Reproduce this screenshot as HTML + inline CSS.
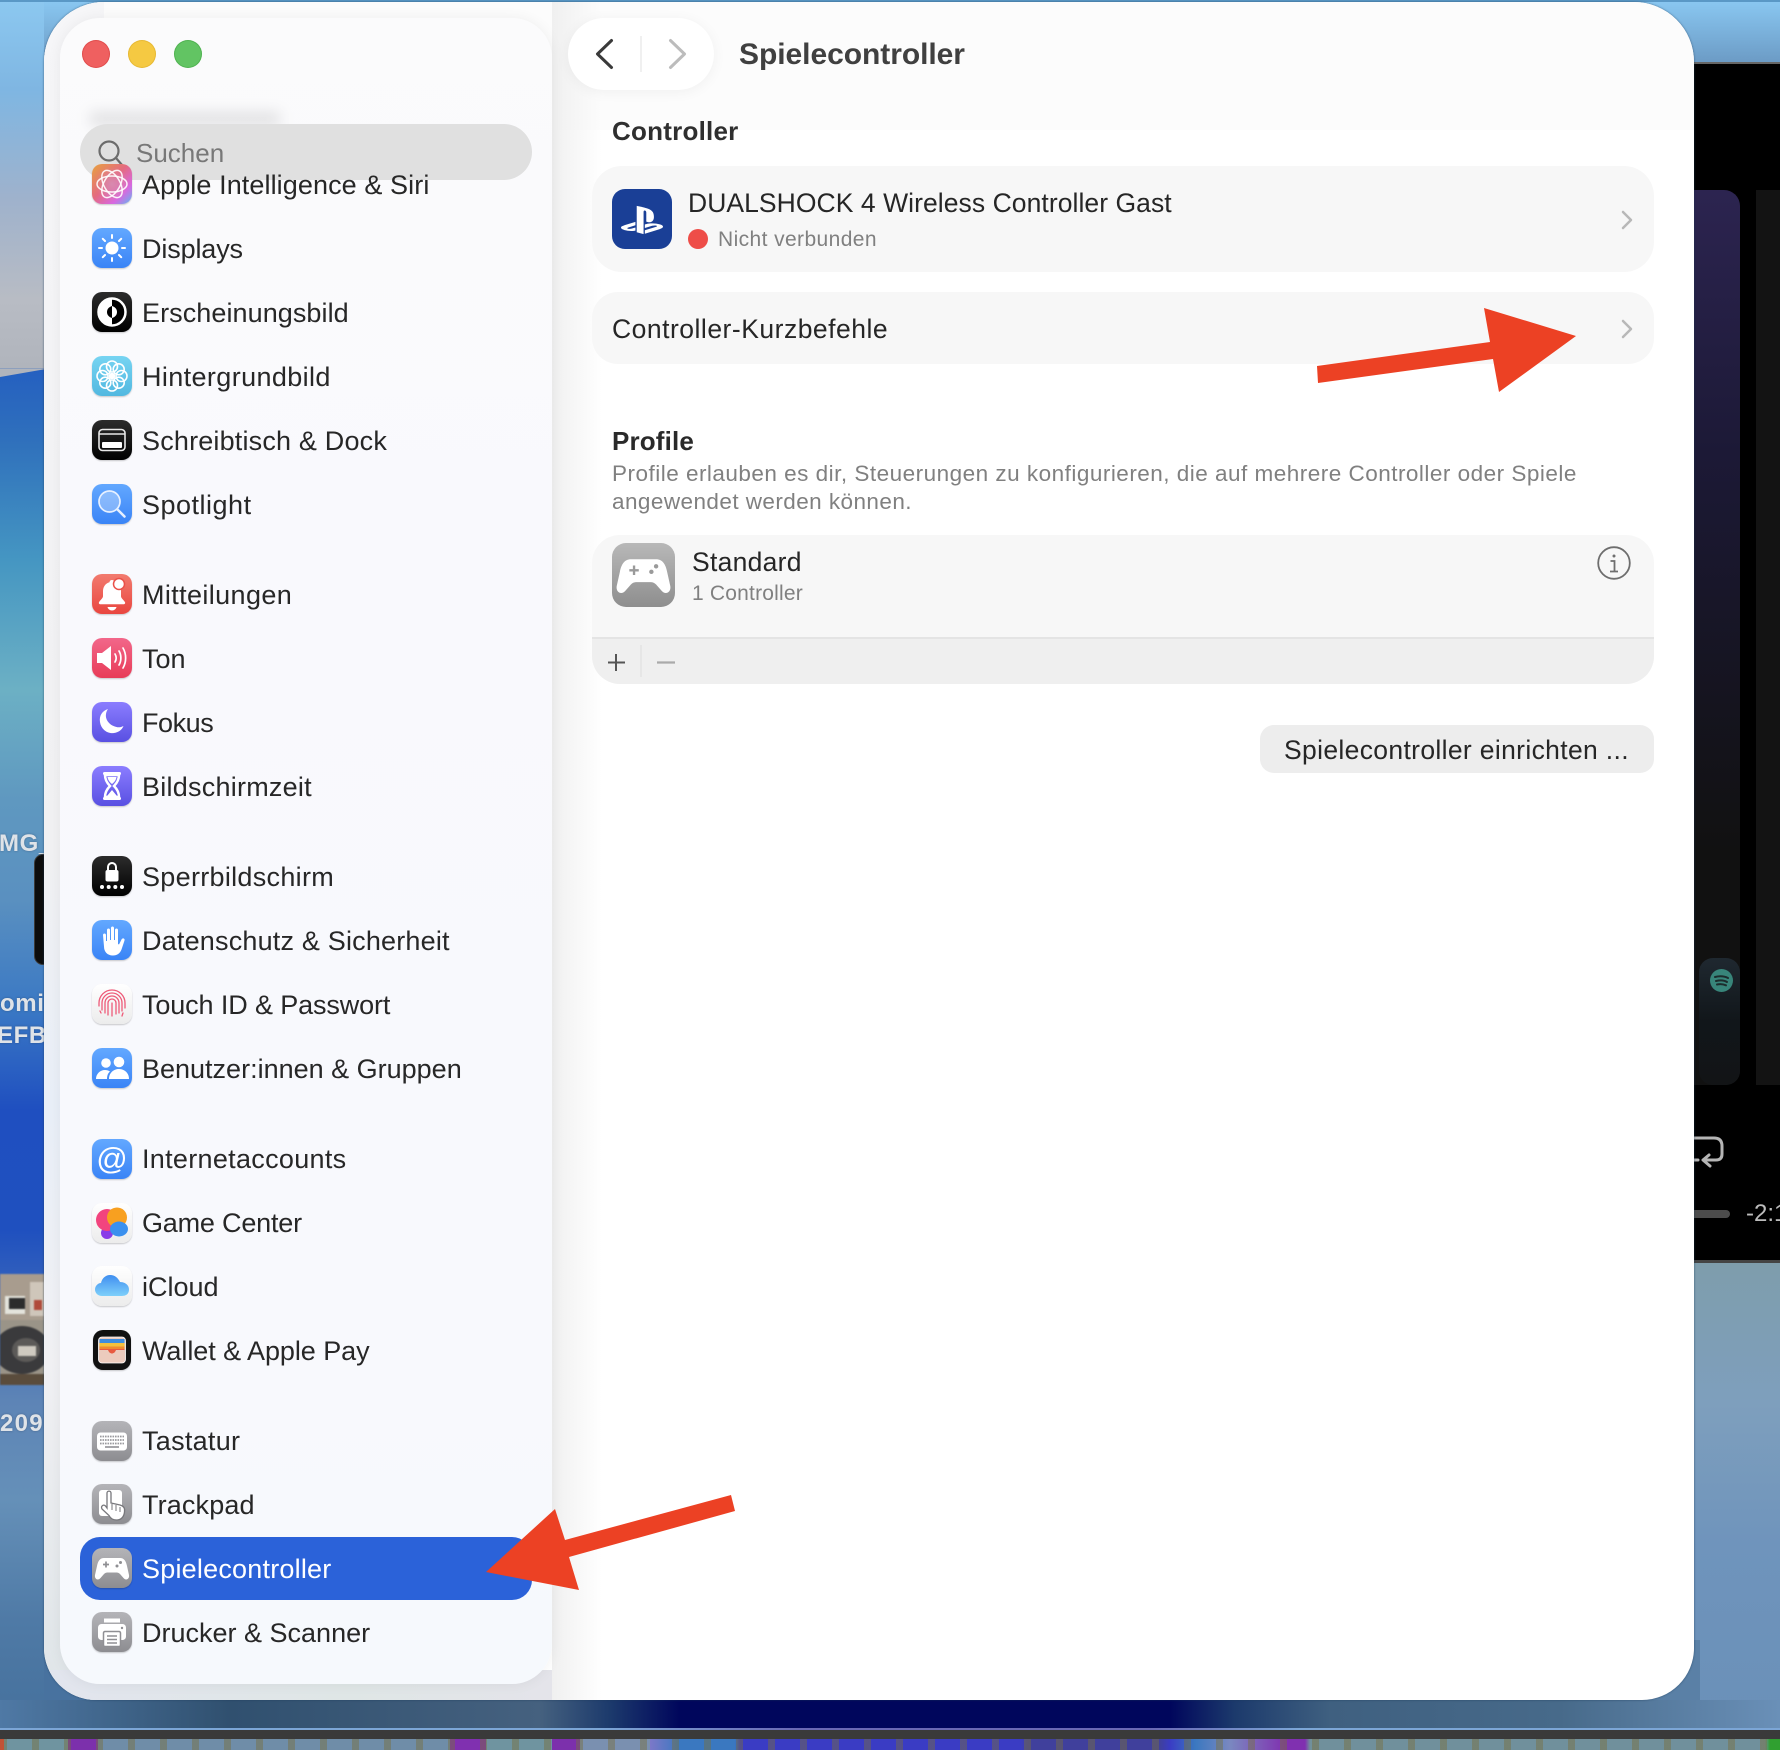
<!DOCTYPE html>
<html lang="de"><head><meta charset="utf-8"><title>Spielecontroller</title>
<style>
html,body{margin:0;padding:0;width:1780px;height:1750px;overflow:hidden;background:#000;font-family:"Liberation Sans",sans-serif}
.a{position:absolute}
.t{position:absolute;white-space:nowrap;line-height:40px;height:40px}
.r{position:absolute;left:92px;width:440px;height:40px}
.r .i{position:absolute;left:0;top:0;width:40px;height:40px;border-radius:10px;box-shadow:0 1px 1.5px rgba(0,0,0,.2);overflow:hidden}
.r svg{display:block;width:40px;height:40px}
.r span{position:absolute;left:50px;top:1px;line-height:40px;font-size:27px;color:#272727;white-space:nowrap}
.bl{background:linear-gradient(#63a8ff,#3a84f6)}
.bk{background:linear-gradient(#2c2c2c,#000)}
.wh{background:linear-gradient(#fff,#ececec)}
.gr{background:linear-gradient(#b4b4b8,#8d8d91)}
.vi{background:linear-gradient(#8b7dff,#5950e2)}
.dk{font-size:24px;font-weight:bold;color:#dfe3e8;overflow:hidden;text-shadow:0 0 2px rgba(40,60,90,.5)}
</style></head><body>
<svg width="0" height="0" style="position:absolute"><defs>
<linearGradient id="cl" x1="0" y1="0" x2="0" y2="1"><stop offset="0" stop-color="#3f8ef0"/><stop offset="1" stop-color="#7fd0fa"/></linearGradient>
</defs></svg>

<!-- wallpaper -->
<div class="a" style="left:0;top:0;width:60px;height:1730px;background:linear-gradient(#8cc8f0 0,#7fb6e2 90px,#9fb2cc 200px,#b8bcc4 300px,#b0b4bc 368px,#2560c0 370px,#2f70bc 440px,#4596c2 560px,#6cb0c4 690px,#5f98c0 800px,#5a90c0 900px,#3a78c4 1010px,#1f4fc0 1110px,#1f50bf 1230px,#5d84b6 1400px,#6590b8 1500px,#4f7aa6 1620px,#45709c 1730px)"></div>
<svg class="a" style="left:0;top:366px" width="46" height="14"><path d="M0 3H46L0 11z" fill="#b0b4bc"/></svg>
<div class="a" style="left:44px;top:0;width:1736px;height:64px;background:linear-gradient(#8ac8f2,#6b9ac4)"></div>
<div class="a" style="left:0;top:0;width:1780px;height:2px;background:#5a98c6"></div>
<div class="a" style="left:1690px;top:62px;width:90px;height:2px;background:#666"></div>
<div class="a" style="left:1690px;top:64px;width:90px;height:1196px;background:#000"></div>
<div class="a" style="left:1690px;top:190px;width:50px;height:660px;border-radius:0 16px 0 0;background:linear-gradient(#2c2450,#1c1936 40%,#111 100%)"></div>
<div class="a" style="left:1690px;top:850px;width:50px;height:235px;background:#111;border-radius:0 0 14px 0"></div>
<div class="a" style="left:1699px;top:958px;width:41px;height:127px;border-radius:14px;background:linear-gradient(#1f2830,#11161a 50%,#121416)"></div>
<div class="a" style="left:1710px;top:969px;width:23px;height:23px;border-radius:50%;background:#38857a"></div>
<svg class="a" style="left:1710px;top:969px" width="23" height="23" fill="none" stroke="#1c2c2c" stroke-width="2" stroke-linecap="round"><path d="M5 8c4-1 9-1 13 1M6 12c4-1 8-1 11 1M7 15.500c3-.7 6-.5 9 .8"/></svg>
<div class="a" style="left:1756px;top:190px;width:24px;height:895px;background:#131313"></div>
<svg class="a" style="left:1694px;top:1134px" width="32" height="34" fill="none" stroke="#b5b5b5" stroke-width="3" stroke-linecap="round" stroke-linejoin="round"><path d="M0 4h20q8 0 8 8v8q0 6-6 6H10M15 21l-6 5 7 6M0 26h4"/></svg>
<div class="a" style="left:1694px;top:1210px;width:36px;height:8px;border-radius:0 4px 4px 0;background:#4c4c4c"></div>
<div class="t" style="left:1746px;top:1194px;font-size:24px;color:#bcbcbc">-2:1</div>
<div class="a" style="left:1690px;top:1260px;width:90px;height:3px;background:#444"></div>
<div class="a" style="left:1690px;top:1263px;width:90px;height:467px;background:linear-gradient(#7e9dac,#7e9fbd 30%,#6f94bc 60%,#6a90b8)"></div>

<div class="a" style="left:34px;top:854px;width:14px;height:111px;background:#0c0c0c;border-radius:9px 0 0 9px;border:1px solid #3a3a3a;box-sizing:border-box"></div>
<div class="t dk" style="left:-1px;top:824px;width:45px;height:40px;line-height:40px;letter-spacing:.6px">MG_</div>
<div class="t dk" style="left:0;top:984px;width:44px;letter-spacing:.6px">omi</div>
<div class="t dk" style="left:-3px;top:1016px;width:47px;letter-spacing:.6px">EFB8</div>
<svg class="a" style="left:0;top:1274px;filter:blur(.9px)" width="48" height="111"><rect width="48" height="111" fill="#9a9488"/><rect width="48" height="46" fill="#a89c8e"/><rect x="5" y="22" width="20" height="18" fill="#e4e4dc"/><rect x="9" y="24" width="16" height="11" fill="#2c2c2c"/><rect x="30" y="8" width="14" height="34" fill="#cfc6ba"/><rect x="34" y="26" width="8" height="10" fill="#b04a3a"/><ellipse cx="22" cy="76" rx="28" ry="24" fill="#3a3a3c"/><ellipse cx="26" cy="76" rx="14" ry="12" fill="#5c5a58"/><rect x="18" y="72" width="18" height="10" fill="#cfcac0"/><rect y="100" width="48" height="11" fill="#5a4c3c"/></svg>
<div class="t dk" style="left:0;top:1404px;width:44px;letter-spacing:1.300px">209</div>

<!-- bottom -->
<div class="a" style="left:0;top:1700px;width:1780px;height:28px;background:linear-gradient(90deg,#4f79a5 0,#30506f 230px,#45617f 540px,#1c3a6c 610px,#00065c 680px,#00065c 1170px,#1c3a6c 1235px,#3f6080 1330px,#476a8a 1560px,#6a90b8 1780px)"></div>
<div class="a" style="left:44px;top:1640px;width:60px;height:60px;background:#48729f"></div>
<div class="a" style="left:1640px;top:1640px;width:60px;height:60px;background:#5a80a6"></div>
<div class="a" style="left:0;top:1728px;width:1780px;height:2px;background:linear-gradient(90deg,#7ca6d6 0,#7ca6d6 600px,#6a68b4 800px,#6a68b4 1150px,#7ca6d6 1300px)"></div>
<div class="a" style="left:0;top:1730px;width:1780px;height:9px;background:#3a3a3a"></div>
<div class="a" style="left:0;top:1739px;width:1780px;height:11px;background:linear-gradient(90deg,#ff3a30 0,#ff3a30 4px,#6f94a0 4px,#6f94a0 68px,#7c30ac 68px,#7c30ac 98px,#6f8da8 98px,#6f8da8 450px,#8030b0 450px,#8030b0 486px,#6f94a0 486px,#6f94a0 552px,#7c30ac 552px,#7c30ac 580px,#7a90b0 580px,#7a90b0 650px,#7c78c8 650px,#3a78c0 680px,#3a78c0 735px,#3a3cc4 740px,#3a3cc4 1020px,#40409c 1030px,#40409c 1160px,#3a3cc4 1170px,#3a78c0 1195px,#7a88c0 1230px,#8030b0 1285px,#8030b0 1305px,#70909c 1310px,#70909c 1765px,#30a030 1770px)"></div>
<div class="a" style="left:0;top:1739px;width:1780px;height:11px;background:repeating-linear-gradient(90deg,rgba(120,110,60,.45) 0 7px,transparent 7px 32px)"></div>

<!-- window -->
<div class="a" style="left:44px;top:2px;width:1650px;height:1698px;border-radius:60px 60px 52px 52px;background:#fff;overflow:hidden;box-shadow:0 0 2px rgba(30,60,90,.7)">
  <div class="a" style="left:0;top:0;width:1650px;height:128px;background:#fcfcfc"></div>
  <div class="a" style="left:0;top:0;width:60px;height:1698px;background:linear-gradient(#f6f6f8,#f1f1f3 50%,#e9eff8 65%,#f1f1f4 80%,#dfe5e8)"></div>
  <div class="a" style="left:508px;top:0;width:50px;height:1698px;background:linear-gradient(90deg,#f0f0f0,rgba(255,255,255,0))"></div>
  <div class="a" style="left:0;bottom:0;width:508px;height:30px;background:linear-gradient(90deg,#e2e5ee,#dfe6e6 60%,#e4e4ea)"></div>
</div>

<!-- sidebar -->
<div class="a" style="left:60px;top:18px;width:492px;height:1666px;border-radius:40px;background:linear-gradient(#fbfbfc,#f9f9fd 30%,#f8f9fd 80%,#f6f9fd);box-shadow:0 0 14px rgba(0,0,0,.06)"></div>
<div class="a" style="left:82px;top:40px;width:28px;height:28px;border-radius:50%;background:#ef6060;box-shadow:inset 0 0 0 1px rgba(200,40,40,.35)"></div>
<div class="a" style="left:128px;top:40px;width:28px;height:28px;border-radius:50%;background:#f5c942;box-shadow:inset 0 0 0 1px rgba(200,150,20,.3)"></div>
<div class="a" style="left:174px;top:40px;width:28px;height:28px;border-radius:50%;background:#62c463;box-shadow:inset 0 0 0 1px rgba(40,140,40,.3)"></div>

<div class="a" style="left:90px;top:112px;width:190px;height:14px;background:rgba(0,0,0,.1);filter:blur(7px)"></div>
<div class="a" style="left:80px;top:124px;width:452px;height:56px;border-radius:28px;background:#e0e0e0"></div>
<svg class="a" style="left:97px;top:138px" width="30" height="30" fill="none" stroke="#6c6c6c" stroke-width="2.200" stroke-linecap="round"><circle cx="12" cy="13" r="9.500"/><path d="M19 20l6 7"/></svg>
<div class="t" style="left:136px;top:133px;font-size:26px;color:#787878">Suchen</div>

<div class="r" style="top:164px"><div class="i" style="background:radial-gradient(circle at 50% 50%,#d88ab0 0,rgba(216,138,176,0) 60%),linear-gradient(135deg,#e8a23e 0,#e46a80 45%,#d868e0 75%,#60b8f0 100%)"><svg viewBox="0 0 40 40" fill="none" stroke="#fff" stroke-width="1.500"><ellipse cx="20" cy="20" rx="15" ry="8" opacity=".9"/><ellipse cx="20" cy="20" rx="15" ry="8" transform="rotate(60 20 20)" opacity=".9"/><ellipse cx="20" cy="20" rx="15" ry="8" transform="rotate(120 20 20)" opacity=".9"/></svg></div><span style="letter-spacing:.09px">Apple Intelligence &amp; Siri</span></div>
<div class="r" style="top:228px"><div class="i bl"><svg viewBox="0 0 40 40"><circle cx="20" cy="20" r="6.500" fill="#fff"/><g stroke="#fff" stroke-width="2" stroke-linecap="round"><path d="M20 7v3M20 30v3M7 20h3M30 20h3M10.800 10.800l2.200 2.200M27 27l2.200 2.200M10.800 29.200L13 27M27 13l2.200-2.200"/></g></svg></div><span style="letter-spacing:-.14px">Displays</span></div>
<div class="r" style="top:292px"><div class="i bk"><svg viewBox="0 0 40 40"><circle cx="20" cy="20" r="13.500" fill="#000" stroke="#fff" stroke-width="2.500"/><path d="M20 6.500a13.500 13.500 0 0 0 0 27z" fill="#fff"/><path d="M20 14c-3 1-5 3-5 6s2 5 5 6z" fill="#000"/><path d="M20 14c3 1 5 3 5 6s-2 5-5 6z" fill="#fff"/></svg></div><span style="letter-spacing:.07px">Erscheinungsbild</span></div>
<div class="r" style="top:356px"><div class="i" style="background:linear-gradient(#76d4f2,#52b8e0)"><svg viewBox="0 0 40 40" fill="none" stroke="#fff" stroke-width="1.600"><circle cx="20" cy="10.500" r="5.500"/><circle cx="20" cy="29.500" r="5.500"/><circle cx="10.500" cy="20" r="5.500"/><circle cx="29.500" cy="20" r="5.500"/><circle cx="13.300" cy="13.300" r="5.500"/><circle cx="26.700" cy="13.300" r="5.500"/><circle cx="13.300" cy="26.700" r="5.500"/><circle cx="26.700" cy="26.700" r="5.500"/><circle cx="20" cy="20" r="2.500" fill="#fff"/></svg></div><span style="letter-spacing:.38px">Hintergrundbild</span></div>
<div class="r" style="top:420px"><div class="i bk"><svg viewBox="0 0 40 40" fill="none"><rect x="7" y="9.500" width="26" height="21" rx="3.500" stroke="#e8e8e8" stroke-width="1.600"/><path d="M7 14h26" stroke="#e8e8e8" stroke-width="1.500"/><rect x="10" y="22" width="20" height="6" rx="1" fill="#fff"/></svg></div><span style="letter-spacing:.18px">Schreibtisch &amp; Dock</span></div>
<div class="r" style="top:484px"><div class="i bl"><svg viewBox="0 0 40 40" fill="none"><circle cx="17.500" cy="17.500" r="10.500" fill="rgba(255,255,255,.3)" stroke="#e6f0ff" stroke-width="1.700"/><path d="M25.500 25.500l7 7" stroke="#e6f0ff" stroke-width="2.500" stroke-linecap="round"/></svg></div><span style="letter-spacing:.5px">Spotlight</span></div>

<div class="r" style="top:574px"><div class="i" style="background:linear-gradient(#f27b6f,#e9463f)"><svg viewBox="0 0 40 40"><path d="M20 6c1.500 0 2.500 1 2.500 2.200 4 1 6.500 4.500 6.500 9v5c0 2 3 4 4 6 .5 1.200-.3 2-1.500 2h-23c-1.200 0-2-.8-1.500-2 1-2 4-4 4-6v-5c0-4.500 2.500-8 6.500-9C17.500 7 18.500 6 20 6z" fill="#fff"/><path d="M15.500 33h9c-.5 2-2.300 3.500-4.500 3.500s-4-1.500-4.500-3.500z" fill="#fff"/><circle cx="27" cy="10" r="5.500" fill="#fff" stroke="#ea5048" stroke-width="1.500"/></svg></div><span style="letter-spacing:.38px">Mitteilungen</span></div>
<div class="r" style="top:638px"><div class="i" style="background:linear-gradient(#f2678a,#e83c58)"><svg viewBox="0 0 40 40" fill="none"><path d="M5 15h5l9-7v24l-9-7H5z" fill="#fff"/><g stroke="#fff" stroke-width="1.700" stroke-linecap="round"><path d="M23 16c1.500 2.500 1.500 5.500 0 8M27 13c2.500 4 2.500 10 0 14M31 10c3.500 6 3.500 14 0 20"/></g></svg></div><span>Ton</span></div>
<div class="r" style="top:702px"><div class="i vi"><svg viewBox="0 0 40 40"><path d="M16 7C10 9 7 14 8 20c1 7 7 12 14 11 4-.5 8-3 9.500-7-2 1-4 1.500-6 1.200C18 24 13 18 14 12c.2-1.800 1-3.500 2-5z" fill="#fff"/></svg></div><span style="letter-spacing:-.45px">Fokus</span></div>
<div class="r" style="top:766px"><div class="i vi"><svg viewBox="0 0 40 40"><rect x="11" y="6" width="18" height="3" rx="1.500" fill="#fff"/><rect x="11" y="31" width="18" height="3" rx="1.500" fill="#fff"/><path d="M13 9h14c0 5-2 8-5 11 3 3 5 6 5 11H13c0-5 2-8 5-11-3-3-5-6-5-11z" fill="none" stroke="#fff" stroke-width="2.500"/><path d="M15.500 11h9c-.5 3-2 5-4.500 7-2.500-2-4-4-4.500-7zM20 24l5 6H15z" fill="#fff"/></svg></div><span style="letter-spacing:.24px">Bildschirmzeit</span></div>

<div class="r" style="top:856px"><div class="i bk"><svg viewBox="0 0 40 40" fill="none"><rect x="13.500" y="14" width="13" height="11.500" rx="2" fill="#fff"/><path d="M16 14v-3a4 4 0 0 1 8 0v3" stroke="#fff" stroke-width="2"/><g fill="#fff"><circle cx="10" cy="31" r="2"/><circle cx="16.700" cy="31" r="2"/><circle cx="23.300" cy="31" r="2"/><circle cx="30" cy="31" r="2"/></g></svg></div><span style="letter-spacing:.3px">Sperrbildschirm</span></div>
<div class="r" style="top:920px"><div class="i bl"><svg viewBox="0 0 40 40"><path d="M11 15c0-2 3-2 3 0v6h1V10c0-2 3-2 3 0v10h1V8c0-2 3-2 3 0v12h1V10c0-2 3-2 3 0v14l1 .5 2.500-5c1-2 3.700-1 3 1l-3 9c-1.500 4-4.500 6-8.500 6-6 0-9-4-9-9z" fill="#fff"/></svg></div><span style="letter-spacing:.19px">Datenschutz &amp; Sicherheit</span></div>
<div class="r" style="top:984px"><div class="i wh"><svg viewBox="0 0 40 40" fill="none" stroke="#ee5a78" stroke-width="1.300" stroke-linecap="round"><path d="M7 22v-3a13 13 0 0 1 26 0v5M10 26v-7a10 10 0 0 1 20 0v8M13 29v-10a7 7 0 0 1 14 0v10M16 31V19a4 4 0 0 1 8 0v11M20 32V19M8 27l1 2M31 29l-1 3"/></svg></div><span style="letter-spacing:-.12px">Touch ID &amp; Passwort</span></div>
<div class="r" style="top:1048px"><div class="i bl"><svg viewBox="0 0 40 40" fill="#fff"><circle cx="14" cy="15" r="4.800"/><circle cx="27" cy="14" r="5.300"/><path d="M4 31c0-5 4-9 9-9 2 0 3.500.5 5 1.500-2 1.500-3 4-3 7.500zM17 31c0-6 4.500-10 10-10s10 4 10 10z"/></svg></div><span>Benutzer:innen &amp; Gruppen</span></div>

<div class="r" style="top:1139px"><div class="i bl"><svg viewBox="0 0 40 40"><text x="20" y="30" text-anchor="middle" font-family="Liberation Sans" font-size="31" fill="#fff">@</text></svg></div><span style="letter-spacing:.3px;top:0">Internetaccounts</span></div>
<div class="r" style="top:1203px"><div class="i wh"><svg viewBox="0 0 40 40"><circle cx="15" cy="30" r="6" fill="#8a3ce8"/><circle cx="15" cy="17" r="11" fill="#f2447e"/><circle cx="25" cy="14.500" r="10" fill="#f8a020"/><ellipse cx="27" cy="26" rx="9" ry="7.500" fill="#3a90ee"/></svg></div><span style="letter-spacing:-.2px;top:0">Game Center</span></div>
<div class="r" style="top:1266px"><div class="i wh"><svg viewBox="0 0 40 40"><path d="M10 30c-4 0-7-3-7-6.500S6 17 9 17c1-5 5-8 9-8 5 0 8 3 10 7 5 0 9 3 9 7.500S34 30 30 30z" fill="url(#cl)"/></svg></div><span>iCloud</span></div>
<div class="r" style="top:1330px"><div class="i" style="background:#111;left:1px;top:0;width:38px;border-radius:10px"><svg viewBox="0 0 40 40" style="margin-left:-1px"><rect x="6.500" y="7" width="27" height="26" rx="3.500" fill="#eccbbd" stroke="#fff" stroke-width=".8"/><rect x="7.500" y="9" width="25" height="4" fill="#3d8de0"/><rect x="7.500" y="13" width="25" height="3.500" fill="#f4c13e"/><rect x="7.500" y="16.500" width="25" height="3.500" fill="#f08a30"/><path d="M7.500 20H16c1 2.500 2.500 3.500 4 3.500s3-1 4-3.500h8.500v-1h-25z" fill="#e85a40"/></svg></div><span style="letter-spacing:-.06px">Wallet &amp; Apple Pay</span></div>

<div class="r" style="top:1421px"><div class="i gr"><svg viewBox="0 0 40 40"><rect x="5" y="11.500" width="30" height="18" rx="3.500" fill="#fff"/><g stroke="#9a9a9e" stroke-width="1.700" stroke-dasharray="1.600 .9"><path d="M8 15.500h24M8 19h24M8 22.500h24"/><path d="M13 26h14" stroke-dasharray="none"/></g></svg></div><span style="letter-spacing:.28px;top:0">Tastatur</span></div>
<div class="r" style="top:1484px"><div class="i gr"><svg viewBox="0 0 40 40"><rect x="7" y="6" width="23" height="26" rx="3" fill="#fff"/><path d="M15 9c0-2.500 4-2.500 4 0v10l9 2c4 1 5 4 4.500 7-.5 5-3.500 8-8 8-3.500 0-6-1.500-7.500-4.500L10 25c-1.500-3 1.500-5 3.500-3l1.500 2z" fill="#fff" stroke="#77777b" stroke-width="1.300"/><path d="M20 20v6M24 21v6M28 23v5" stroke="#77777b" stroke-width="1"/></svg></div><span style="letter-spacing:.14px">Trackpad</span></div>

<div class="a" style="left:80px;top:1537px;width:452px;height:63px;border-radius:20px;background:#2b62d9"></div>
<div class="r" style="top:1548px"><div class="i gr"><svg viewBox="0 0 40 40"><path d="M12 10h16c4 0 6 3 7 8l2 9c.7 4-3 6-5.500 3l-3.500-4c-1-1-2-1.500-3.500-1.500h-9c-1.500 0-2.500.5-3.500 1.500l-3.500 4c-2.500 3-6.200 1-5.500-3l2-9c1-5 3-8 7-8z" fill="#fff"/><path d="M14 13.500v6M11 16.500h6" stroke="#8f8f93" stroke-width="1.700"/><circle cx="25" cy="18" r="1.500" fill="#8f8f93"/><circle cx="28.500" cy="14.500" r="1.500" fill="#8f8f93"/></svg></div><span style="color:#fff;letter-spacing:.21px">Spielecontroller</span></div>
<div class="r" style="top:1612px"><div class="i gr"><svg viewBox="0 0 40 40"><path d="M12 6.500h16v4H12z" fill="#fff"/><rect x="6" y="12" width="28" height="16" rx="3.500" fill="#fff"/><rect x="11.500" y="19.500" width="17" height="15" rx="1.500" fill="#fff" stroke="#8f8f93" stroke-width="1.500"/><path d="M15 24h10M15 27.500h10M15 31h10" stroke="#8f8f93" stroke-width="1.400"/><circle cx="30" cy="16" r="1.200" fill="#8f8f93"/></svg></div><span>Drucker &amp; Scanner</span></div>

<!-- toolbar -->
<div class="a" style="left:568px;top:18px;width:146px;height:72px;border-radius:36px;background:#fff;box-shadow:0 2px 14px rgba(0,0,0,.05)"></div>
<svg class="a" style="left:590px;top:36px" width="110" height="36" fill="none" stroke-linecap="round" stroke-linejoin="round" stroke-width="3"><path d="M21.500 4.500L7.500 18l14 13.500" stroke="#3a3a3a"/><path d="M80.500 4.500L94.500 18 80.500 31.500" stroke="#bcbcbc"/><path d="M51 -2v40" stroke="#ececec" stroke-width="1.500"/></svg>
<div class="t" style="left:739px;top:35px;font-size:30px;font-weight:bold;color:#404040;letter-spacing:-.05px">Spielecontroller</div>

<div class="t" style="left:612px;top:111px;font-size:26px;font-weight:bold;color:#2f2f2f;letter-spacing:.23px">Controller</div>

<div class="a" style="left:592px;top:166px;width:1062px;height:106px;border-radius:30px;background:#f7f7f7"></div>
<div class="a" style="left:612px;top:189px;width:60px;height:60px;border-radius:13px;background:#1a3f96"></div>
<svg class="a" style="left:621px;top:202px" width="42" height="36" viewBox="0 0 24 24" preserveAspectRatio="none"><path fill="#fff" d="M8.984 2.596v17.547l3.915 1.261V6.688c0-.69.304-1.151.794-.991.636.18.76.814.76 1.505v5.875c2.441 1.193 4.362-.002 4.362-3.152 0-3.237-1.126-4.675-4.438-5.827-1.307-.448-3.728-1.186-5.39-1.502zm4.656 16.241l6.296-2.275c.715-.258.826-.625.246-.818-.586-.192-1.637-.139-2.357.123l-4.205 1.5V14.980l.24-.085s1.201-.42 2.913-.615c1.696-.18 3.785.03 5.437.661 1.848.601 2.04 1.472 1.576 2.072-.465.6-1.622 1.036-1.622 1.036l-8.544 3.107V18.860zM1.807 18.600c-1.900-.545-2.214-1.668-1.352-2.320.801-.586 2.160-1.052 2.160-1.052l5.615-2.013v2.313L4.205 17c-.705.271-.825.632-.239.826.586.195 1.637.15 2.343-.12L8.247 17v2.074c-.12.03-.256.044-.39.073-1.939.331-3.996.196-6.038-.479z"/></svg>
<div class="t" style="left:688px;top:183px;font-size:26.500px;color:#262626;letter-spacing:.06px">DUALSHOCK 4 Wireless Controller Gast</div>
<div class="a" style="left:688px;top:229px;width:20px;height:20px;border-radius:50%;background:#ee4d48"></div>
<div class="t" style="left:718px;top:220px;font-size:21px;color:#808080;letter-spacing:.4px">Nicht verbunden</div>
<svg class="a" style="left:1619px;top:209px" width="16" height="22" fill="none" stroke="#b8b8b8" stroke-width="2.500" stroke-linecap="round" stroke-linejoin="round"><path d="M4 3l8 8-8 8"/></svg>

<div class="a" style="left:592px;top:292px;width:1062px;height:72px;border-radius:26px;background:#f7f7f7"></div>
<div class="t" style="left:612px;top:309px;font-size:26.500px;color:#262626;letter-spacing:.5px">Controller-Kurzbefehle</div>
<svg class="a" style="left:1619px;top:318px" width="16" height="22" fill="none" stroke="#b8b8b8" stroke-width="2.500" stroke-linecap="round" stroke-linejoin="round"><path d="M4 3l8 8-8 8"/></svg>

<div class="t" style="left:612px;top:421px;font-size:26px;font-weight:bold;color:#2a2a2a;letter-spacing:.15px">Profile</div>
<div class="t" style="left:612px;top:454px;font-size:22.500px;color:#808080;letter-spacing:.49px">Profile erlauben es dir, Steuerungen zu konfigurieren, die auf mehrere Controller oder Spiele</div>
<div class="t" style="left:612px;top:482px;font-size:22.500px;color:#808080;letter-spacing:.44px">angewendet werden können.</div>

<div class="a" style="left:592px;top:535px;width:1062px;height:149px;border-radius:28px;background:#f7f7f7;overflow:hidden"><div class="a" style="left:0;top:102px;width:1062px;height:47px;background:#efefef;border-top:2px solid #e4e4e4;box-sizing:border-box"></div></div>
<div class="a" style="left:612px;top:543px;width:63px;height:64px;border-radius:14px;background:linear-gradient(#b8b8b8,#8e8e8e)"></div>
<svg class="a" style="left:612px;top:543px" width="63" height="64" viewBox="0 0 40 40"><path d="M12 10h16c4 0 6 3 7 8l2 9c.7 4-3 6-5.500 3l-3.500-4c-1-1-2-1.500-3.500-1.500h-9c-1.500 0-2.500.5-3.500 1.500l-3.500 4c-2.500 3-6.200 1-5.500-3l2-9c1-5 3-8 7-8z" fill="#fff"/><path d="M14 14v6M11 17h6" stroke="#9a9a9a" stroke-width="1.500"/><circle cx="25" cy="18" r="1.400" fill="#9a9a9a"/><circle cx="28" cy="14.500" r="1.400" fill="#9a9a9a"/></svg>
<div class="t" style="left:692px;top:542px;font-size:26.500px;color:#262626;letter-spacing:.28px">Standard</div>
<div class="t" style="left:692px;top:574px;font-size:21px;color:#808080;letter-spacing:.2px">1 Controller</div>
<svg class="a" style="left:1597px;top:546px" width="34" height="34" fill="none" stroke="#6e6e6e"><circle cx="17" cy="17" r="15.800" stroke-width="1.800"/><circle cx="17" cy="10" r="1.500" fill="#6e6e6e" stroke="none"/><path d="M13.500 15h4v10M13 25.500h8" stroke-width="1.800"/></svg>
<svg class="a" style="left:605px;top:645px" width="75" height="34" fill="none"><path d="M11 9v17M3 17.500h17" stroke="#555" stroke-width="2"/><path d="M36 0v32" stroke="#e2e2e2" stroke-width="1.500"/><path d="M52 17.500h18" stroke="#aaa" stroke-width="2.200"/></svg>

<div class="a" style="left:1260px;top:725px;width:394px;height:48px;border-radius:14px;background:#ededed"></div>
<div class="t" style="left:1284px;top:730px;font-size:26.500px;color:#262626;letter-spacing:.34px">Spielecontroller einrichten ...</div>

<!-- arrows -->
<svg class="a" style="left:0;top:0;pointer-events:none" width="1780" height="1750"><path fill="#ec4124" d="M1317 366L1490 342 1484 308 1576 336 1499 392 1493 359 1318 383z"/><path fill="#ec4124" d="M731 1495L735 1511 569 1557 579 1590 486 1572 555 1509 565 1540z"/></svg>
</body></html>
